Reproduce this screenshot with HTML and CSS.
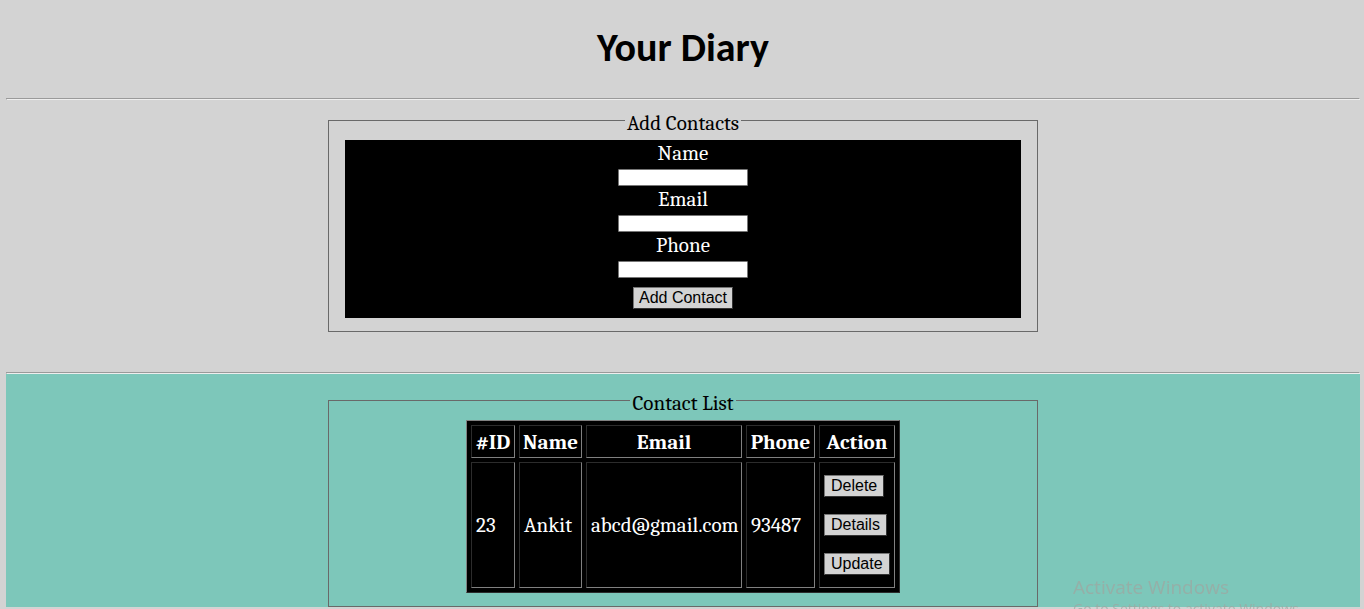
FILE: index.html
```html
<!DOCTYPE html>
<html lang="en">
<head>
<meta charset="utf-8">
<meta name="viewport" content="width=device-width, initial-scale=1">
<title>Your Diary</title>
<link rel="stylesheet" href="styles.css">
</head>
<body>
<header class="header"><h1 class="title">Your Diary</h1></header>
<hr class="rule">
<main>
<section class="add">
<fieldset class="panel">
<legend class="legend">Add Contacts</legend>
<form class="form">
<label class="label" for="name">Name</label>
<input class="field" id="name" type="text">
<label class="label" for="email">Email</label>
<input class="field" id="email" type="text">
<label class="label" for="phone">Phone</label>
<input class="field" id="phone" type="text">
<button class="button button-add" type="button">Add Contact</button>
</form>
</fieldset>
</section>
<hr class="rule">
<section class="list">
<fieldset class="panel">
<legend class="legend">Contact List</legend>
<table class="table">
<colgroup><col class="col-id"><col class="col-name"><col class="col-email"><col class="col-phone"><col class="col-action"></colgroup>
<thead>
<tr><th scope="col">#ID</th><th scope="col">Name</th><th scope="col">Email</th><th scope="col">Phone</th><th scope="col">Action</th></tr>
</thead>
<tbody>
<tr>
<td>23</td><td>Ankit</td><td>abcd@gmail.com</td><td>93487</td>
<td><div class="actions">
<button class="button" type="button">Delete</button>
<button class="button" type="button">Details</button>
<button class="button" type="button">Update</button>
</div></td>
</tr>
</tbody>
</table>
</fieldset>
</section>
</main>
<aside class="watermark">
<p class="watermark-title">Activate Windows</p>
<p class="watermark-text">Go to Settings to activate Windows.</p>
</aside>
</body>
</html>
```
FILE: styles.css
```css
* { box-sizing: border-box; }
html { overflow: hidden; }
body {
  margin: 0 4px 2px 6px;
  background: #d3d3d3;
  color: #000;
  font-family: Cambria, Caladea, "DejaVu Serif Condensed", "Liberation Serif", serif;
  font-size: 21px;
  line-height: 26px;
}
.header { padding: 24px 0 26px; }
.title {
  margin: 0;
  font-family: Carlito, Lato, sans-serif;
  font-size: 40px;
  line-height: 48px;
  text-align: center;
}
.rule {
  height: 2px;
  margin: 0;
  border: 1px solid;
  border-color: #9a9a9a #eee #eee #9a9a9a;
}
.add { padding: 6px 0 40px; }
.list { padding-top: 12px; background: #7dc7ba; }
.panel {
  width: 710px;
  max-width: 100%;
  margin: 0 auto;
  padding: 5px 16px 13px;
  border: 1px solid #696969;
}
.legend { padding: 5px 2px 0; margin: 0 auto; line-height: 24px; }
.form {
  display: flex;
  flex-direction: column;
  align-items: center;
  padding-bottom: 9px;
  background: #000;
  color: #fff;
}
.field {
  width: 130px;
  height: 17px;
  margin-top: 3px;
  padding: 0 2px;
  border: 1px solid #767676;
  border-radius: 1px;
  background: #fff;
  font: 12px "Liberation Sans", Arial, sans-serif;
}
.button {
  height: 22px;
  padding: 0 6px;
  border: 1px solid;
  border-color: #767676 #333 #333 #767676;
  border-radius: 0;
  background: #d3d3d3;
  color: #000;
  font: 16px/18px "Liberation Sans", Arial, sans-serif;
}
.button-add { margin-top: 9px; padding: 0 5px; }
.table {
  width: 434px;
  margin: 0 auto;
  table-layout: fixed;
  border: 1px solid;
  border-color: #808080 #2c2c2c #2c2c2c #808080;
  border-spacing: 4px;
  background: #000;
  color: #fff;
}
.col-id { width: 44px; }
.col-name { width: 63px; }
.col-email { width: 156px; }
.col-phone { width: 69px; }
.col-action { width: 76px; }
.table th, .table td {
  padding: 3px 4px;
  border: 1px solid;
  border-color: #2c2c2c #808080 #808080 #2c2c2c;
  white-space: nowrap;
}
.table th { padding: 3px 0 2px; }
.table td { text-align: left; }
.actions {
  display: flex;
  flex-direction: column;
  align-items: flex-start;
  gap: 17px;
  padding: 9px 0;
}
.watermark {
  position: fixed;
  right: 56px;
  bottom: -10px;
  width: 235px;
  color: #a0a5a0;
  font-family: "Open Sans", "Noto Sans", sans-serif;
  opacity: 0.7;
  white-space: nowrap;
  pointer-events: none;
}
.watermark p { margin: 0; }
.watermark-title { font-size: 19px; line-height: 24px; }
.watermark-text { font-size: 14px; line-height: 20px; }
```
